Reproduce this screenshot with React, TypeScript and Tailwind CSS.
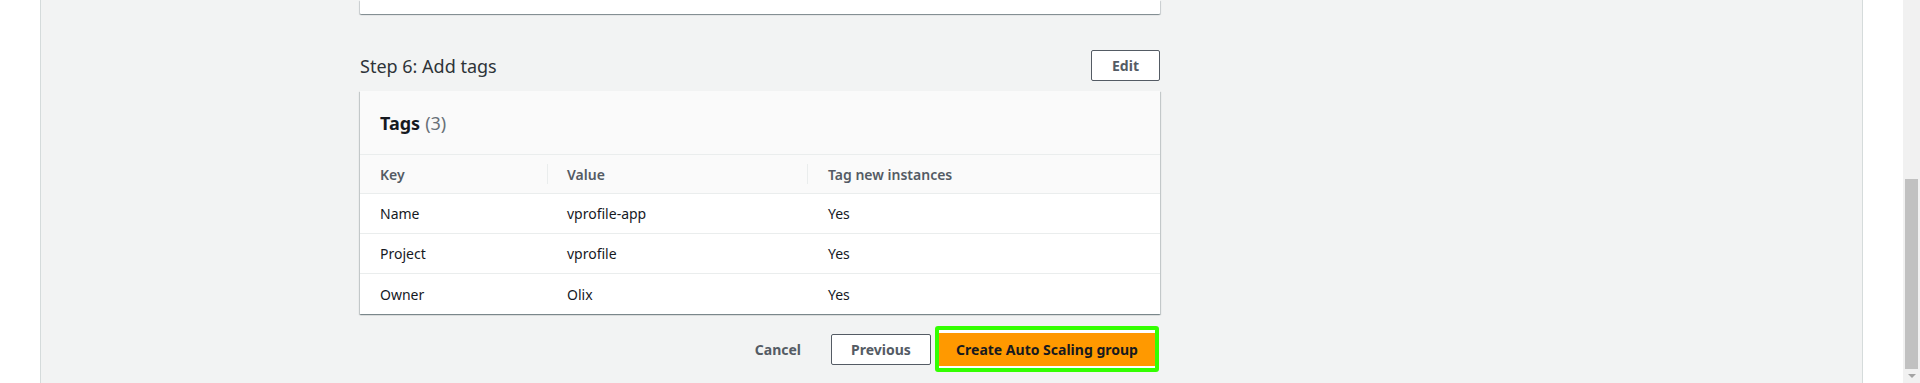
export default function App() {
  const rows = [
    { k: "Name", v: "vprofile-app", t: "Yes" },
    { k: "Project", v: "vprofile", t: "Yes" },
    { k: "Owner", v: "Olix", t: "Yes" },
  ];
  const shadow =
    "shadow-[0_1px_1px_0_rgba(0,28,36,0.3),1px_1px_1px_0_rgba(0,28,36,0.15),-1px_1px_1px_0_rgba(0,28,36,0.15)]";
  return (
    <div className="flex h-[383px] w-[1920px] overflow-hidden bg-white font-['Noto_Sans','Open_Sans',sans-serif] text-[14px] text-[#16191f]">
      <div className="w-[40px] shrink-0 bg-white" />
      <div className="w-[1823px] shrink-0 border-x border-[#d5dbdb] bg-[#f2f3f3]">
        <div className="ml-[319px] w-[800px]">
          <div className={`h-[14px] rounded-b-[1px] bg-white ${shadow}`} />
          <div className="mt-[36px] flex h-[31px] items-center justify-between">
            <h2 className="text-[18px] leading-[22px] text-[#2e3338]">Step 6: Add tags</h2>
            <button className="h-[31px] w-[69px] rounded-[2px] border border-[#545b64] bg-white text-[14px] font-bold text-[#545b64]">
              Edit
            </button>
          </div>
          <div className={`mt-[10px] bg-white ${shadow}`}>
            <div className="flex h-[64px] items-center border-b border-[#eaeded] bg-[#fafafa] px-[20px]">
              <span className="text-[18px] font-bold leading-[22px] text-[#16191f]">Tags</span>
              <span className="ml-[5px] text-[18px] leading-[22px] text-[#687078]">(3)</span>
            </div>
            <div className="grid h-[39px] grid-cols-[187px_260px_1fr] border-b border-[#eaeded] bg-[#fafafa] text-[14px] font-semibold text-[#545b64]">
              <div className="flex items-center pl-[20px]">Key</div>
              <div className="flex items-center">
                <div className="h-[20px] w-px bg-[#eaeded]" />
                <span className="ml-[19px]">Value</span>
              </div>
              <div className="flex items-center">
                <div className="h-[20px] w-px bg-[#eaeded]" />
                <span className="ml-[20px]">Tag new instances</span>
              </div>
            </div>
            {rows.map((r, i) => (
              <div
                key={r.k}
                className={`grid h-[40px] grid-cols-[187px_260px_1fr] items-center ${
                  i < rows.length - 1 ? "border-b border-[#eaeded]" : ""
                }`}
              >
                <div className="pl-[20px]">{r.k}</div>
                <div className="pl-[20px]">{r.v}</div>
                <div className="pl-[21px]">{r.t}</div>
              </div>
            ))}
          </div>
          <div className="mt-[12px] flex items-center justify-end pr-[1px]">
            <button className="h-[31px] px-[20px] text-[14px] font-bold text-[#545b64]">Cancel</button>
            <button className="ml-[10px] h-[31px] w-[100px] rounded-[2px] border border-[#545b64] bg-white text-[14px] font-bold text-[#545b64]">
              Previous
            </button>
            <div className="ml-[4px] h-[46px] w-[224px] rounded-[3px] border-4 border-[#33ff00]">
              <button className="flex h-full w-full items-center justify-center border-t-[3px] border-b-[2px] border-white bg-[#ff9900] text-[14px] font-bold text-[#16191f]">
                Create Auto Scaling group
              </button>
            </div>
          </div>
        </div>
      </div>
      <div className="w-[40px] shrink-0 bg-white" />
      <div className="flex w-[17px] shrink-0 flex-col items-center bg-[#f1f1f1]">
        <div className="mt-[179px] h-[190px] w-[13px] bg-[#c1c1c1]" />
        <div className="mt-[5px] h-0 w-0 border-x-[4px] border-t-[4px] border-x-transparent border-t-[#a3a3a3]" />
      </div>
    </div>
  );
}
